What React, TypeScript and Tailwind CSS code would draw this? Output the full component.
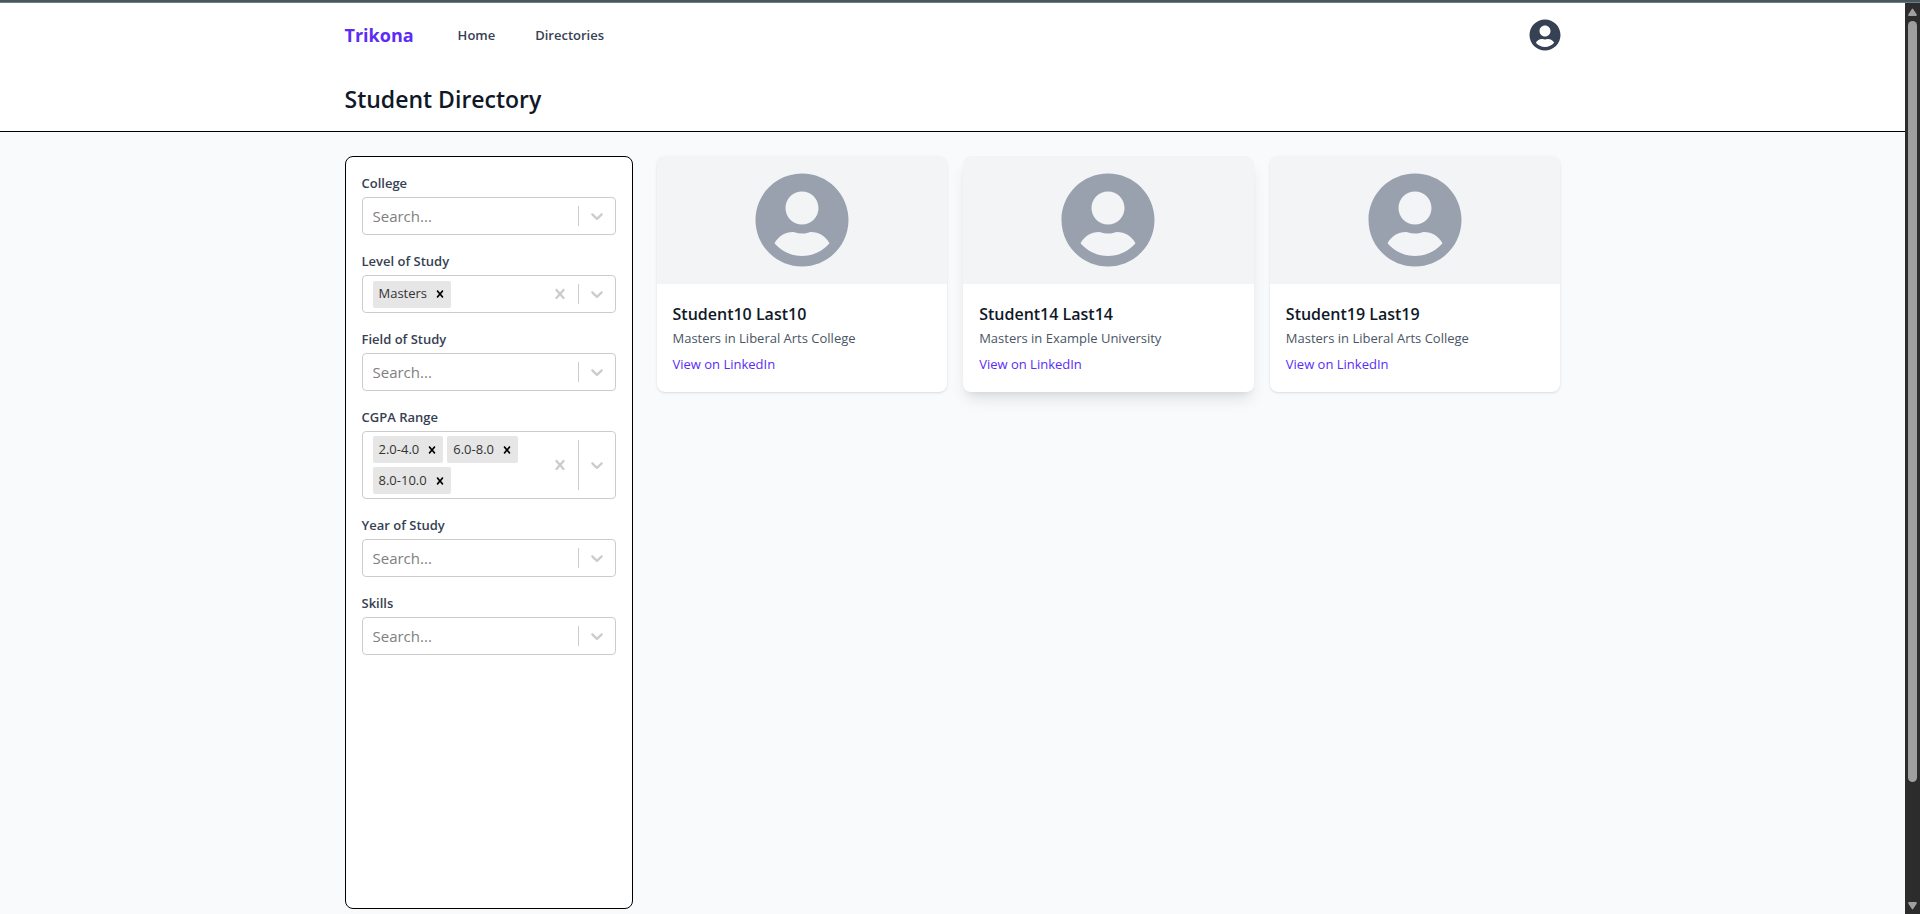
import { FaUserCircle } from "react-icons/fa";

type Filter = { id: string; label: string; values: string[] };
type Student = { name: string; study: string; raised: boolean };

const filters: Filter[] = [
  { id: "college", label: "College", values: [] },
  { id: "level", label: "Level of Study", values: ["Masters"] },
  { id: "field", label: "Field of Study", values: [] },
  { id: "cgpa", label: "CGPA Range", values: ["2.0-4.0", "6.0-8.0", "8.0-10.0"] },
  { id: "year", label: "Year of Study", values: [] },
  { id: "skills", label: "Skills", values: [] },
];

const students: Student[] = [
  { name: "Student10 Last10", study: "Masters in Liberal Arts College", raised: false },
  { name: "Student14 Last14", study: "Masters in Example University", raised: true },
  { name: "Student19 Last19", study: "Masters in Liberal Arts College", raised: false },
];

function CrossIcon({ className }: { className: string }) {
  return (
    <svg viewBox="0 0 20 20" fill="currentColor" className={className} aria-hidden="true">
      <path d="M14.348 14.849c-0.469 0.469-1.229 0.469-1.697 0l-2.651-3.030-2.651 3.029c-0.469 0.469-1.229 0.469-1.697 0-0.469-0.469-0.469-1.229 0-1.697l2.758-3.15-2.759-3.152c-0.469-0.469-0.469-1.228 0-1.697s1.228-0.469 1.697 0l2.652 3.031 2.651-3.031c0.469-0.469 1.228-0.469 1.697 0s0.469 1.229 0 1.697l-2.758 3.152 2.758 3.15c0.469 0.469 0.469 1.229 0 1.698z" />
    </svg>
  );
}

function ChevronIcon() {
  return (
    <svg viewBox="0 0 20 20" fill="currentColor" className="size-5" aria-hidden="true">
      <path d="M4.516 7.548c0.436-0.446 1.043-0.481 1.576 0l3.908 3.747 3.908-3.747c0.533-0.481 1.141-0.446 1.574 0 0.436 0.445 0.408 1.197 0 1.615-0.406 0.418-4.695 4.502-4.695 4.502-0.217 0.223-0.502 0.335-0.787 0.335s-0.57-0.112-0.789-0.335c0 0-4.287-4.084-4.695-4.502s-0.436-1.17 0-1.615z" />
    </svg>
  );
}

function MultiSelect({ id, label, values }: Filter) {
  const filled = values.length > 0;
  return (
    <div>
      <label htmlFor={id} className="mb-1 block text-[13px] leading-5 font-semibold text-gray-700">
        {label}
      </label>
      <div className="flex min-h-[38px] items-stretch rounded border border-[#cccccc] bg-white">
        <div className="flex min-w-0 flex-1 flex-wrap items-center px-2 py-0.5">
          {values.map((value) => (
            <span key={value} className="m-0.5 flex h-[27px] items-stretch rounded-xs bg-[#e6e6e6] text-[13px] text-[#333333]">
              <span className="flex items-center pr-0.5 pl-1.5">{value}</span>
              <button type="button" aria-label={`Remove ${value}`} className="flex items-center px-1 text-black">
                <CrossIcon className="size-3.5" />
              </button>
            </span>
          ))}
          <input
            id={id}
            type="text"
            placeholder={filled ? undefined : "Search..."}
            className="mx-0.5 h-6 w-0 min-w-0.5 flex-1 bg-transparent text-[15px] text-[#333333] outline-none placeholder:text-[#808080]"
          />
        </div>
        <div className="flex items-stretch text-[#cccccc]">
          {filled && (
            <button type="button" aria-label={`Clear ${label}`} className="flex items-center px-2">
              <CrossIcon className="size-5" />
            </button>
          )}
          <span className="my-2 w-px bg-[#cccccc]" />
          <button type="button" aria-label={`Open ${label}`} className="flex items-center px-2">
            <ChevronIcon />
          </button>
        </div>
      </div>
    </div>
  );
}

function StudentCard({ name, study, raised }: Student) {
  return (
    <article className={raised ? "overflow-hidden rounded-lg bg-white shadow-lg" : "overflow-hidden rounded-lg bg-white shadow-sm"}>
      <div className="flex h-32 items-center justify-center bg-gray-100">
        <FaUserCircle className="size-24 text-gray-400" />
      </div>
      <div className="px-4 pt-4 pb-[18px]">
        <h2 className="text-base leading-7 font-semibold text-gray-900">{name}</h2>
        <p className="text-[13px] leading-5 text-gray-600">{study}</p>
        <a href="#linkedin" className="mt-1.5 block text-[13px] leading-5 text-[#5b2cf5]">
          View on LinkedIn
        </a>
      </div>
    </article>
  );
}

function Scrollbar() {
  return (
    <div className="flex w-[15px] shrink-0 flex-col items-center bg-[#2c2c2c] py-1" aria-hidden="true">
      <svg viewBox="0 0 9 8" className="mt-px h-2 w-[9px] text-[#9f9f9f]" fill="currentColor">
        <path d="M3.7 1.2Q4.5 0 5.3 1.2L8.8 6.4Q9 8 8 8H1Q0 8 .2 6.4Z" />
      </svg>
      <div className="mt-[5px] w-[9px] grow-[760] rounded-full bg-[#9f9f9f]" />
      <div className="grow-[120]" />
      <svg viewBox="0 0 9 8" className="h-2 w-[9px] text-[#9f9f9f]" fill="currentColor">
        <path d="M3.7 6.8Q4.5 8 5.3 6.8L8.8 1.6Q9 0 8 0H1Q0 0 .2 1.6Z" />
      </svg>
    </div>
  );
}

export default function App() {
  return (
    <div className="flex min-h-screen flex-col bg-gray-50 font-['Open_Sans','Noto_Sans',sans-serif]">
      <div className="h-[3px] border-b border-[#6b7f89] bg-[#47565f]" />
      <div className="flex flex-1 items-stretch">
        <div className="flex min-w-0 flex-1 flex-col">
          <header className="border-b border-black bg-white">
            <nav className="mx-auto flex h-16 w-full max-w-7xl items-center px-8">
              <a href="#top" className="text-lg leading-7 font-bold text-[#5b2cf5]">
                Trikona
              </a>
              <div className="ml-8 flex flex-1 gap-4 text-[13px] leading-5 font-semibold text-gray-700">
                <a href="#home" className="px-3 py-2">
                  Home
                </a>
                <a href="#directories" className="px-3 py-2">
                  Directories
                </a>
              </div>
              <button type="button" aria-label="Account" className="text-gray-700">
                <FaUserCircle className="size-8" />
              </button>
            </nav>
            <div className="mx-auto w-full max-w-7xl px-8 py-4">
              <h1 className="text-[23px] leading-8 font-semibold text-gray-900">Student Directory</h1>
            </div>
          </header>
          <main className="mx-auto flex w-full max-w-7xl flex-1 gap-6 px-8 pt-6 pb-[5px]">
            <aside className="flex w-72 shrink-0 flex-col gap-4 rounded-lg border border-black bg-white p-4">
              {filters.map((filter) => (
                <MultiSelect key={filter.id} {...filter} />
              ))}
            </aside>
            <section className="grid flex-1 grid-cols-3 items-start gap-4">
              {students.map((student) => (
                <StudentCard key={student.name} {...student} />
              ))}
            </section>
          </main>
        </div>
        <Scrollbar />
      </div>
    </div>
  );
}
